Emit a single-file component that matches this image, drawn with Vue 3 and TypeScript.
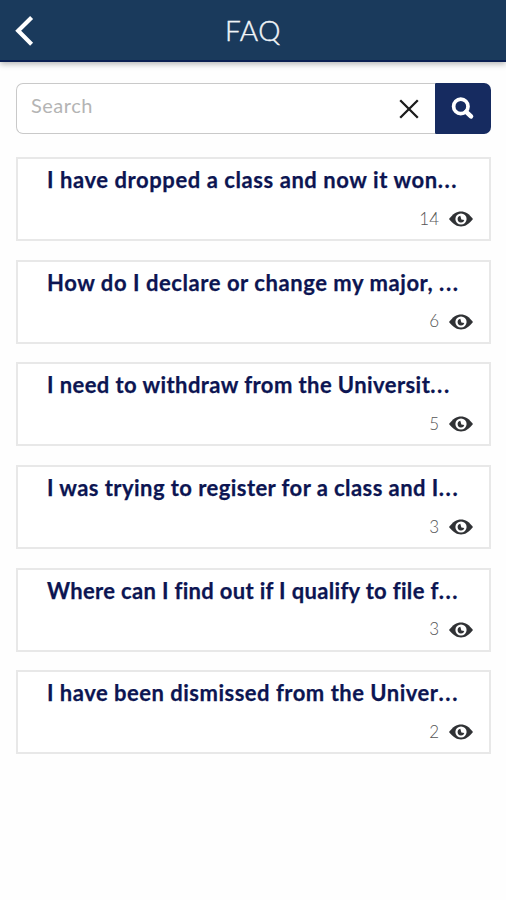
<script setup lang="ts">
interface Question {
  title: string
  views: number
  tracking: number
}

const questions: Question[] = [
  { title: 'I have dropped a class and now it won', views: 14, tracking: 0.57 },
  { title: 'How do I declare or change my major, ', views: 6, tracking: 0.56 },
  { title: 'I need to withdraw from the Universit', views: 5, tracking: 0.42 },
  { title: 'I was trying to register for a class and I', views: 3, tracking: 0.44 },
  { title: 'Where can I find out if I qualify to file f', views: 3, tracking: 0.33 },
  { title: 'I have been dismissed from the Univer', views: 2, tracking: 0.5 },
]
</script>

<template>
  <div class="screen">
    <header class="bar">
      <button class="back" aria-label="Back">
        <svg width="20" height="32" viewBox="0 0 20 32">
          <path d="M17.6 3.4 L4.2 16.8 L17.6 30.2" fill="none" stroke="#fff" stroke-width="4.2" />
        </svg>
      </button>
      <h1>FAQ</h1>
    </header>

    <main>
      <div class="search">
        <div class="field">
          <span class="placeholder">Search</span>
          <svg class="clear" width="20" height="20" viewBox="0 0 20 20">
            <path d="M1.2 1.2 L18.8 18.8 M18.8 1.2 L1.2 18.8" fill="none" stroke="#1c1c1c" stroke-width="2.3" />
          </svg>
        </div>
        <button class="submit" aria-label="Search">
          <svg width="24" height="24" viewBox="0 0 24 24" fill="none" stroke="#fff">
            <circle cx="9.8" cy="9.4" r="7.2" stroke-width="3.7" />
            <path d="M15.2 14.8 L20 19.4" stroke-width="4.6" stroke-linecap="round" />
          </svg>
        </button>
      </div>

      <ul class="list">
        <li v-for="q in questions" :key="q.title" class="card">
          <h2><span :style="{ letterSpacing: q.tracking + 'px' }">{{ q.title }}</span><span class="dots">...</span></h2>
          <div class="views">
            <span>{{ q.views }}</span>
            <svg width="24" height="16" viewBox="0 0 24 16">
              <path d="M0 8 C4 3 7.5 .6 12 .6 S20 3 24 8 C20 13 16.5 15.4 12 15.4 S4 13 0 8 Z" fill="#303235" />
              <circle cx="12" cy="8" r="5.6" fill="#fff" />
              <path d="M11.3 4.8 A3.4 3.4 0 1 0 15.3 9 L12.4 8.6 Z" fill="#303235" />
            </svg>
          </div>
        </li>
      </ul>
    </main>
  </div>
</template>

<style>
body {
  margin: 0;
  background: #fefefe;
}
</style>

<style scoped>
.screen {
  box-sizing: border-box;
  min-height: 900px;
  overflow: hidden;
  font-family: Lato, "Liberation Sans", sans-serif;
}
.bar {
  display: grid;
  grid-template-columns: 60px 1fr 60px;
  align-items: center;
  box-sizing: border-box;
  height: 62px;
  background: #1a3a5c;
  border-bottom: 2px solid #0a1f52;
  box-shadow: 0 2px 6px rgba(0, 0, 0, 0.3);
}
button {
  border: 0;
  padding: 0;
  background: none;
}
.back {
  display: flex;
  padding-left: 14px;
}
h1 {
  margin: 0;
  text-align: center;
  font-size: 28px;
  line-height: 34px;
  font-weight: 300;
  letter-spacing: 0.5px;
  color: #f1f5f8;
  -webkit-text-stroke: 0.4px #f1f5f8;
}
main {
  padding: 21px 15px 0 16px;
}
.search {
  display: flex;
  height: 51px;
}
.field {
  flex: 1;
  display: flex;
  justify-content: space-between;
  align-items: center;
  box-sizing: border-box;
  padding: 0 16px 0 14px;
  border: 1.5px solid #c9c9c9;
  border-right: 0;
  border-radius: 7px 0 0 7px;
  background: #fff;
}
.placeholder {
  padding-bottom: 7px;
  font-size: 20px;
  line-height: 26px;
  letter-spacing: 0.5px;
  color: #b4b4b4;
}
.submit {
  display: flex;
  align-items: center;
  justify-content: center;
  width: 56px;
  background: #162b60;
  border-radius: 1px 7px 7px 1px;
}
.list {
  display: grid;
  gap: 18.7px;
  margin: 23px 0 0;
  padding: 0;
  list-style: none;
}
.card {
  box-sizing: border-box;
  height: 84px;
  padding: 7px 16px 0 29px;
  border: 2px solid #e8e8e8;
  background: #fff;
}
h2 {
  margin: 0;
  white-space: pre;
  font-size: 22px;
  line-height: 28px;
  font-weight: 700;
  color: #0c1552;
  -webkit-text-stroke: 0.25px #0c1552;
}
.dots {
  letter-spacing: 1.6px;
}
.views {
  display: flex;
  align-items: center;
  justify-content: flex-end;
  gap: 10px;
  height: 20px;
  margin-top: 15px;
  font-size: 17px;
  line-height: 20px;
}
.views span {
  padding-bottom: 1px;
  font-weight: 300;
  color: #555;
}
</style>
